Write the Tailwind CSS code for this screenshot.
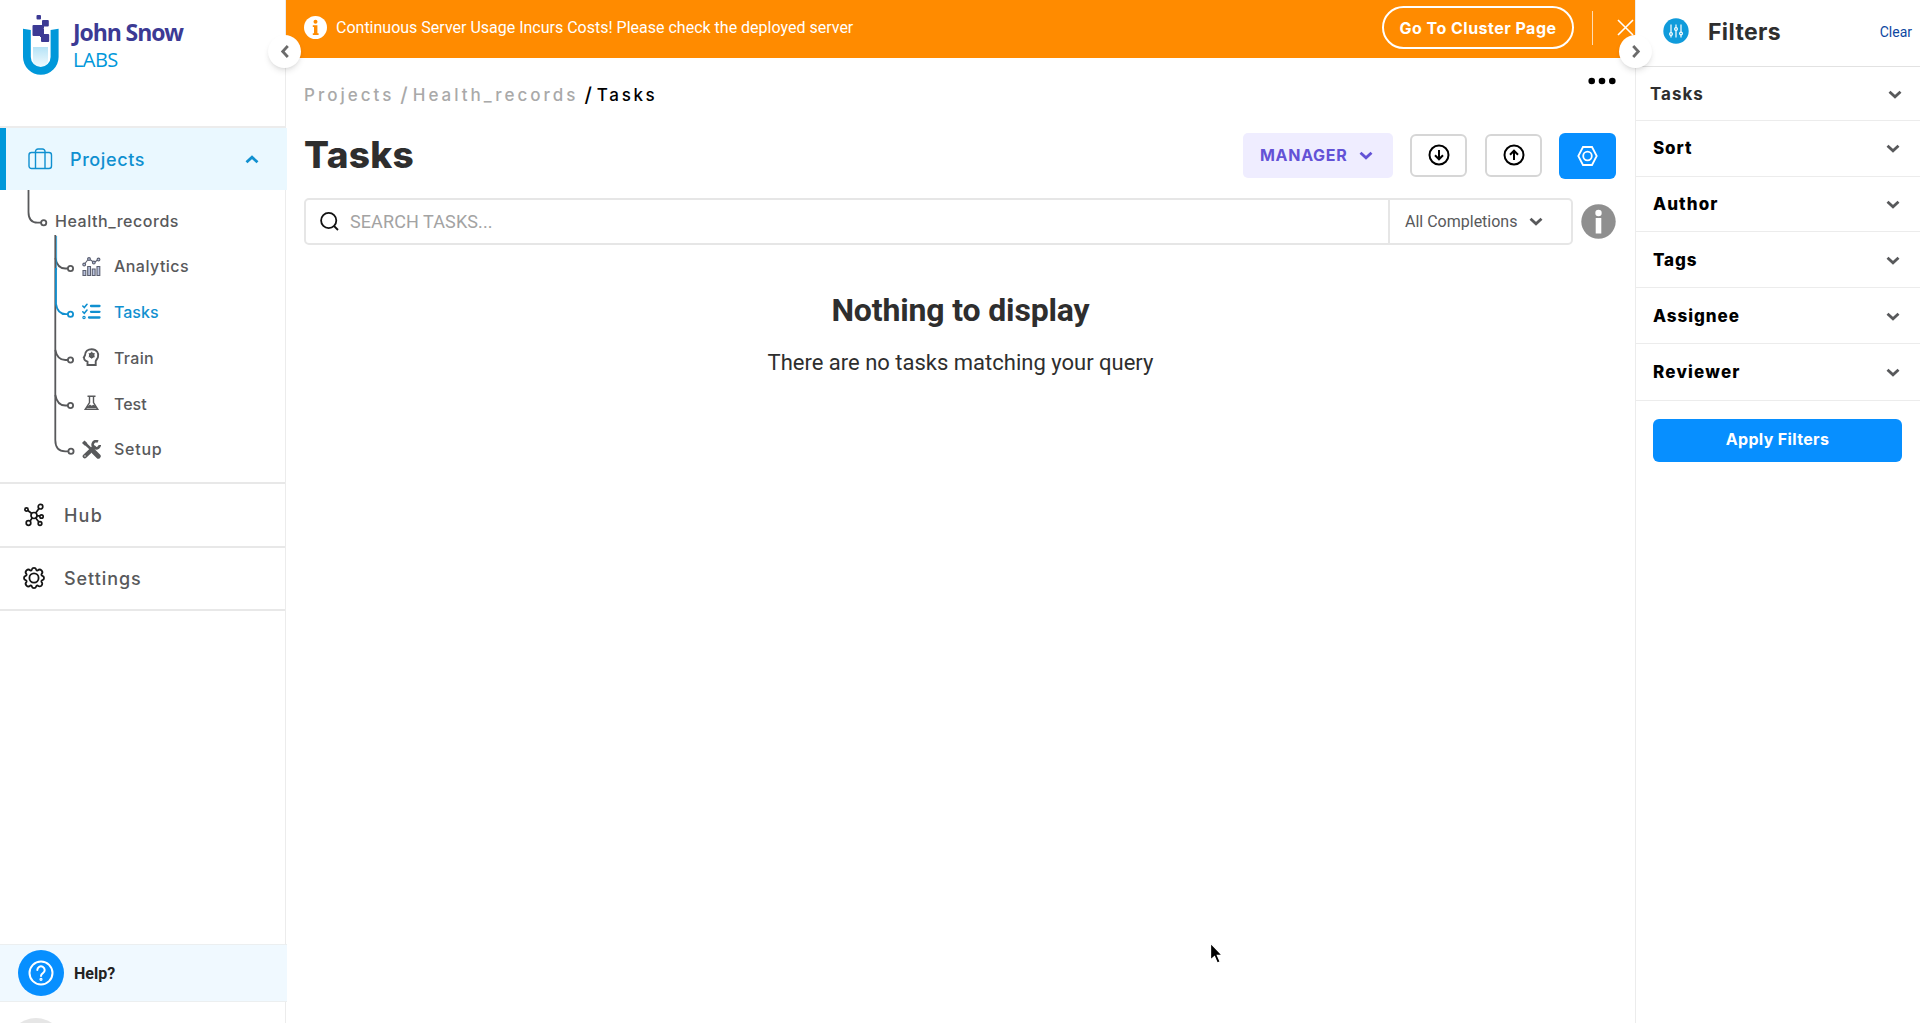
<!DOCTYPE html>
<html lang="en">
<head>
<meta charset="utf-8">
<title>Tasks</title>
<script src="https://cdn.jsdelivr.net/npm/@tailwindcss/browser@4"></script>
</head>
<body class="bg-white">
<svg class="hidden">
  <symbol id="chev" viewBox="0 0 14 9"><path d="M1.500 1.700 7 6.800l5.500-5.100" fill="none" stroke="currentColor" stroke-width="2.800"/></symbol>
</svg>
<div class="relative flex h-[1023px] w-[1920px] overflow-hidden font-['Inter',sans-serif] text-[#58595b] whitespace-nowrap">

  <!-- Sidebar -->
  <aside class="flex w-[286px] shrink-0 flex-col border-r border-[#ececec]">
    <div class="flex h-[128px] shrink-0 items-start border-b-2 border-[#ececec] pt-3.5 pl-[22px]">
      <svg class="h-[62px] w-[38px] shrink-0" viewBox="0 0 38 62">
        <defs><linearGradient id="liq" x1="0" y1="0" x2="0" y2="1"><stop offset="0" stop-color="#b5e3f6"/><stop offset="1" stop-color="#f4fbfe"/></linearGradient></defs>
        <path d="M11 33h15v12a7 7 0 0 1-15 2z" fill="url(#liq)"/>
        <path d="M1 14.800 8.800 16V43a9.900 9.900 0 0 0 19.800 0V16l8-1.200V43a17.800 17.800 0 0 1-35.600 0z" fill="#0098da"/>
        <g fill="#3c3a94"><rect x="14.500" y="1" width="4.500" height="4.500" rx="1"/><rect x="20" y="6" width="6.800" height="6.500" rx="1"/><rect x="10.500" y="11" width="11" height="11" rx="1"/><rect x="18" y="19" width="4" height="4"/><rect x="19.500" y="14.500" width="2.500" height="8"/><rect x="19" y="20" width="8.200" height="8" rx="1"/><path d="M19 11h3v3h-3z"/></g>
      </svg>
      <div class="flex flex-col pt-1 pl-[13px] font-['Open_Sans',sans-serif]">
        <span class="text-[23px] leading-[28px] font-bold tracking-[-1.100px] text-[#3c3a94]">John Snow</span>
        <span class="text-[20px] leading-[27px] tracking-[-0.600px] text-[#0098da]">LABS</span>
      </div>
    </div>

    <div class="flex h-[62px] w-[287px] shrink-0 items-center border-l-[6px] border-[#0098da] bg-[#eaf8ff] pl-[22px] text-[#1090d0]">
      <svg class="h-[22px] w-[25px]" viewBox="0 0 25 22" fill="none" stroke="currentColor" stroke-width="1.400"><rect x="1" y="4.500" width="22.500" height="16" rx="2.500"/><path d="M7.500 20.500v-17A2.500 2.500 0 0 1 10 1h4.500A2.500 2.500 0 0 1 17 3.500v17"/></svg>
      <span class="ml-[17px] text-[18px] font-medium tracking-[0.600px]">Projects</span>
      <svg class="mr-[28px] ml-auto h-[9px] w-[14px] rotate-180"><use href="#chev"/></svg>
    </div>

    <nav class="relative h-[292px] shrink-0 pt-2 text-[16px] font-medium">
      <svg class="absolute top-0 left-0 h-[292px] w-[120px]" fill="none" stroke="#58595b" stroke-width="1.800">
        <path d="M28.500 0V22q0 10.700 9 10.700H41"/><circle cx="43.700" cy="32.800" r="2.600"/>
        <path d="M55.300 45V250q0 11.300 10 11.300H68"/><circle cx="71" cy="261.300" r="2.600"/>
        <path d="M55.300 68q2 10.500 10 10.500H68"/><circle cx="70.500" cy="78.500" r="2.600"/>
        <path d="M55.300 160q2 10 10 10H68"/><circle cx="70.500" cy="170" r="2.600"/>
        <path d="M55.300 205q2 10.500 10 10.500H68"/><circle cx="70.500" cy="215.500" r="2.600"/>
        <g stroke="#1090d0"><path d="M56.600 46V80" stroke-width=".8"/><path d="M56 78V114q1.500 10.200 10 10.200H68"/><circle cx="70.500" cy="124.200" r="2.600"/></g>
      </svg>
      <a class="flex h-[45.700px] items-center pl-[55px] tracking-[0.540px]">Health_records</a>
      <a class="flex h-[45.700px] items-center gap-[13px] pb-px pl-[82px] tracking-[0.450px]">
        <svg class="h-[19px] w-[19px]" viewBox="0 0 19 19" fill="#b9c2dd" stroke="#5b5f70" stroke-width="1.100"><path d="M1 13.500h2.800v5H1zM5.700 9.500h2.800v9H5.700zM10.300 12h2.800v6.500h-2.800zM15 9.500h2.800v9H15z"/><path d="m3 6.500 3-4M8 2.500l3 2.200M13 5l2.500-2" fill="none"/><circle cx="2.200" cy="7.500" r="1.400"/><circle cx="7" cy="2" r="1.400"/><circle cx="11.800" cy="5.500" r="1.400"/><circle cx="16.500" cy="2.500" r="1.400"/></svg>
        <span>Analytics</span></a>
      <a class="flex h-[45.700px] items-center gap-[13px] pl-[82px] text-[#1090d0]">
        <svg class="h-[19px] w-[19px]" viewBox="0 0 19 19" fill="none" stroke="currentColor" stroke-width="2.300" stroke-linecap="round"><path d="M9 3h8.500M9 8.800h8.500M7 14.500h10.500"/><path d="m.8 3 1.500 1.500L5 1.300M.8 8.800l1.500 1.500L5 7.100" stroke-width="1.600"/><circle cx="2" cy="14.500" r=".6"/></svg>
        <span>Tasks</span></a>
      <a class="flex h-[45.700px] items-center gap-[13px] pl-[82px] tracking-[0.320px]">
        <svg class="h-[19px] w-[19px]" viewBox="0 0 19 19" fill="none" stroke="currentColor" stroke-width="1.900"><path d="M5.500 17v-3.400C.5 12 3 10.500 1.800 9.500L3 7.300C3 3.500 6 1.200 9.700 1.200c5 0 7.500 4.300 6.300 7.800-.5 1.700-1.800 2.800-2.300 4.200V17z"/><circle cx="9.700" cy="7.200" r="1.900" stroke-width="1.800"/><path d="M9.700 3.700v7M6.700 5.500l6 3.400M12.700 5.500l-6 3.400" stroke-width="1"/></svg>
        <span>Train</span></a>
      <a class="flex h-[45.700px] items-center gap-[13px] pl-[82px]">
        <svg class="h-[19px] w-[19px]" viewBox="0 0 19 19" fill="none" stroke="currentColor" stroke-width="1.400"><path d="M5.500 2.300h8M7.500 2.500v6L3.200 15.300h12.600L11.500 8.500v-6M6 13.300l2-1.800 1.500 1 2-1 1.800 1.800z"/></svg>
        <span>Test</span></a>
      <a class="flex h-[45.700px] items-center gap-[13px] pl-[82px] tracking-[0.750px]">
        <svg class="h-[19px] w-[19px]" viewBox="0 0 19 19" fill="none" stroke="currentColor"><path d="M2.800 16.300 12 7.500" stroke-width="4.300" stroke-linecap="round"/><path d="M16 1.600A3.600 3.600 0 1 0 17.800 5" stroke-width="2.600"/><path d="m2 2.500 8 7.500" stroke-width="2.600"/><path d="m1.200 1.700 3 2.800" stroke-width="3.600"/><path d="m11.800 11.700 4.500 4.500" stroke-width="4.800" stroke-linecap="round"/><circle cx="3" cy="16" r=".7" fill="#fff" stroke="none"/></svg>
        <span>Setup</span></a>
    </nav>

    <a class="flex h-[65.500px] shrink-0 items-center border-y-2 border-[#e8e8e8] pl-[23px] text-[18px] font-medium">
      <svg class="h-[24px] w-[22px]" viewBox="0 0 22 24" fill="none" stroke="#151515" stroke-width="1.700"><circle cx="11" cy="12.500" r="3"/><circle cx="3.500" cy="6.500" r="1.600"/><circle cx="17.500" cy="3.700" r="2.300"/><circle cx="18.500" cy="13.500" r="1.700"/><circle cx="5.500" cy="20" r="2.300"/><circle cx="17" cy="20.500" r="1.800"/><path d="m4.800 7.500 4 3M16 5.500l-3.300 4.600M14 12.800h2.800M9.200 15l-2.300 3.200M12.700 15l3.200 4"/></svg>
      <span class="mt-px ml-[19px] tracking-[1.200px]">Hub</span>
    </a>
    <a class="flex h-[63.500px] shrink-0 items-center border-b-2 border-[#e8e8e8] pl-[23px] text-[18px] font-medium">
      <svg class="h-[22px] w-[22px]" viewBox="0 0 22 22" fill="none" stroke="#151515" stroke-width="1.800" stroke-linejoin="round"><circle cx="11" cy="11" r="4.600"/><path d="M8.800 2.600a2.300 2.300 0 0 1 4.400 0q.4 1.200 1.600.8a2.500 2.500 0 0 1 3.700 3.700q-.5 1.300.9 1.700a2.300 2.300 0 0 1 0 4.400q-1.400.4-.9 1.700a2.500 2.500 0 0 1-3.700 3.700q-1.200-.4-1.600.8a2.300 2.300 0 0 1-4.400 0q-.4-1.200-1.600-.8a2.500 2.500 0 0 1-3.700-3.700q.5-1.300-.9-1.700a2.300 2.300 0 0 1 0-4.400q1.400-.4.900-1.700a2.500 2.500 0 0 1 3.700-3.700q1.200.4 1.600-.8z"/></svg>
      <span class="mt-px ml-[19px] tracking-[0.950px]">Settings</span>
    </a>

    <div class="mt-auto flex h-[58px] w-[287px] shrink-0 items-center border-y border-[#eceff0] bg-[#f0f9ff] pl-[18px] font-['Roboto',sans-serif]">
      <div class="flex size-[46px] items-center justify-center rounded-full bg-[#078fff]">
        <svg class="size-[26px]" viewBox="0 0 26 26" fill="none" stroke="#fff" stroke-width="2"><circle cx="13" cy="13" r="11.500"/><path d="M9.300 10a3.700 3.700 0 1 1 5.600 3.200c-1.300.8-1.900 1.300-1.900 2.800" stroke-linecap="round"/><circle cx="13" cy="19.300" r=".6"/></svg>
      </div>
      <span class="mt-px ml-2.5 text-[16px] font-bold text-[#222]">Help?</span>
    </div>
    <div class="h-[21px] shrink-0 overflow-hidden pt-[16px] pl-2"><div class="size-[56px] rounded-full bg-[#e6e6e6]"></div></div>
  </aside>

  <!-- Main -->
  <main class="flex w-[1349px] shrink-0 flex-col">
    <div class="flex h-[58px] shrink-0 items-center bg-[#ff8b00] pl-[18px] text-white">
      <svg class="-mt-1 size-[23px]" viewBox="0 0 23 23"><circle cx="11.500" cy="11.500" r="11.500" fill="#fff"/><circle cx="11.500" cy="5.700" r="2" fill="#ff8b00"/><path d="M8.800 9.200h4.600v8h1.200v1.800H8.800v-1.800H10V11H8.800z" fill="#ff8b00"/></svg>
      <span class="-mt-0.5 ml-[9px] font-['Roboto',sans-serif] text-[16px]">Continuous Server Usage Incurs Costs! Please check the deployed server</span>
      <button class="-mt-[3px] ml-auto h-[43px] w-[192px] rounded-full border-2 border-white text-[16px] font-bold tracking-[0.480px]">Go To Cluster Page</button>
      <div class="-mt-0.5 ml-[18px] h-[34px] w-px bg-white/70"></div>
      <svg class="mr-px -mt-[3px] ml-6 size-[17px]" viewBox="0 0 17 17" stroke="#fff" stroke-width="1.600"><path d="m1 1 15 15M16 1 1 16"/></svg>
    </div>

    <div class="flex h-[70px] shrink-0 items-start justify-between pr-[19px] pl-[18px]">
      <div class="flex pt-[21px] text-[17px] leading-[32px] font-medium tracking-[3px] text-[#a9a9a9]">
        <span>Projects</span><span class="ml-1.5 text-[20px] tracking-normal">/</span><span class="ml-[5px] tracking-[3px]">Health_records</span><span class="ml-1.5 text-[20px] tracking-normal text-black">/</span><span class="ml-[5px] tracking-[2.650px] text-black">Tasks</span>
      </div>
      <svg class="mt-[19px] h-2 w-[28px]" viewBox="0 0 28 8"><circle cx="3.700" cy="4" r="3.300"/><circle cx="14" cy="4" r="3.300"/><circle cx="24.300" cy="4" r="3.300"/></svg>
    </div>

    <div class="flex h-[54px] shrink-0 items-center pr-[19px] pl-[18px]">
      <h1 class="text-[37px] font-extrabold tracking-[0.300px] text-[#2e2e2e]">Tasks</h1>
      <button class="ml-auto flex h-[45px] w-[150px] items-center rounded-[5px] bg-[#efedff] pl-[17px] text-[#6352d6]"><span class="text-[16px] font-bold tracking-[0.700px]">MANAGER</span><svg class="ml-3 h-[9px] w-[14px]"><use href="#chev"/></svg></button>
      <button class="ml-[17px] flex h-[43px] w-[57px] items-center justify-center rounded-[6px] border-2 border-[#d6d6d6]"><svg class="size-[22px]" viewBox="0 0 22 22" fill="none" stroke="#000" stroke-width="2"><circle cx="11" cy="11" r="9.500"/><path d="M11 6v9M7 11.300l4 4 4-4"/></svg></button>
      <button class="ml-[18px] flex h-[43px] w-[57px] items-center justify-center rounded-[6px] border-2 border-[#d6d6d6]"><svg class="size-[22px]" viewBox="0 0 22 22" fill="none" stroke="#000" stroke-width="2"><circle cx="11" cy="11" r="9.500"/><path d="M11 16V7M7 10.700l4-4 4 4"/></svg></button>
      <button class="mt-px ml-[17px] flex h-[46px] w-[57px] items-center justify-center rounded-[6px] bg-[#078fff]"><svg class="h-5 w-[21px]" viewBox="0 0 21 20" fill="none" stroke="#fff" stroke-width="1.800"><path d="M6 1h9l4.700 9-4.700 9H6l-4.700-9z"/><circle cx="10.500" cy="10" r="4.300"/></svg></button>
    </div>

    <div class="mt-4 flex h-[47px] shrink-0 items-center pl-[18px]">
      <div class="flex h-full w-[1269px] items-center rounded-[5px] border-2 border-[#e6e6e6] font-['Roboto',sans-serif]">
        <svg class="ml-3.5 size-[19px]" viewBox="0 0 19 19" fill="none" stroke="#111" stroke-width="1.800"><circle cx="8.700" cy="8.500" r="7.600"/><path d="m14 14 4 4"/></svg>
        <span class="ml-[11px] text-[18px] tracking-[0.100px] text-[#a3a3a3]">SEARCH TASKS...</span>
        <div class="ml-auto flex h-full w-[183px] items-center border-l-2 border-[#e6e6e6] pl-[15px] text-[16px]"><span>All Completions</span><svg class="ml-3 h-[9px] w-[14px]"><use href="#chev"/></svg></div>
      </div>
      <svg class="ml-2 size-[35px]" viewBox="0 0 35 35"><circle cx="17.500" cy="17.500" r="17.200" fill="#8f8f8f"/><circle cx="17.500" cy="9" r="3.200" fill="#fff"/><path d="M14.700 14h5.600v15.500h-5.600z" fill="#fff"/></svg>
    </div>

    <div class="flex flex-col items-center pt-[44px] font-['Roboto',sans-serif] text-[#2e2e2e]">
      <h2 class="text-[32px] leading-[42px] font-bold tracking-[-0.150px]">Nothing to display</h2>
      <p class="mt-4 text-[22px] leading-[32px]">There are no tasks matching your query</p>
    </div>
  </main>

  <!-- Filters -->
  <aside class="flex w-[286px] shrink-0 flex-col border-l border-[#ececec] text-[17px] font-extrabold text-black">
    <div class="flex h-[67px] shrink-0 items-center border-b border-[#e2e2e2] pr-[9px] pl-[27px]">
      <svg class="-mt-1 size-[26px]" viewBox="0 0 26 26"><circle cx="13" cy="13" r="12.700" fill="#109bdb"/><g fill="#109bdb" stroke="#fff" stroke-width="1.200"><path d="M8 6.500v13M13 6.500v13M18 6.500v13"/><circle cx="8" cy="16" r="1.400"/><circle cx="13" cy="11" r="1.400"/><circle cx="18" cy="15.500" r="1.400"/></g></svg>
      <span class="-mt-0.5 ml-[19px] text-[23px] font-bold tracking-[0.360px] text-[#2e2e2e]">Filters</span>
      <span class="-mt-0.5 ml-auto font-['Roboto',sans-serif] text-[14px] font-normal text-[#0d47a1]">Clear</span>
    </div>
    <div class="flex h-[54px] shrink-0 items-center justify-between border-b border-[#ececec] pt-0.5 pr-[19px] pl-[14px] font-bold tracking-[1px] text-[#2e2e2e]">Tasks<svg class="h-[9px] w-[14px] text-[#58595b]"><use href="#chev"/></svg></div>
    <div class="flex h-[55.500px] shrink-0 items-center justify-between border-b border-[#ececec] pt-px pr-[21px] pl-[17px] tracking-[0.900px]">Sort<svg class="h-[9px] w-[14px] text-[#58595b]"><use href="#chev"/></svg></div>
    <div class="flex h-[55.500px] shrink-0 items-center justify-between border-b border-[#ececec] pt-0.5 pr-[21px] pl-[17px] tracking-[1.100px]">Author<svg class="h-[9px] w-[14px] text-[#58595b]"><use href="#chev"/></svg></div>
    <div class="flex h-[56px] shrink-0 items-center justify-between border-b border-[#ececec] pt-0.5 pr-[21px] pl-[17px] tracking-[0.850px]">Tags<svg class="h-[9px] w-[14px] text-[#58595b]"><use href="#chev"/></svg></div>
    <div class="flex h-[56px] shrink-0 items-center justify-between border-b border-[#ececec] pt-0.5 pr-[21px] pl-[17px] tracking-[0.950px]">Assignee<svg class="h-[9px] w-[14px] text-[#58595b]"><use href="#chev"/></svg></div>
    <div class="flex h-[56.500px] shrink-0 items-center justify-between border-b border-[#ececec] pt-0.5 pr-[21px] pl-[17px] tracking-[1.200px]">Reviewer<svg class="h-[9px] w-[14px] text-[#58595b]"><use href="#chev"/></svg></div>
    <button class="mt-[18px] ml-[17px] h-[43px] w-[249px] shrink-0 rounded-[6px] bg-[#078fff] pb-0.5 text-[16px] font-bold tracking-[0.350px] text-white">Apply Filters</button>
  </aside>

  <!-- Collapse handles over the column edges -->
  <button class="absolute top-[35px] left-[268px] flex size-[33px] items-center justify-center rounded-full bg-white text-[#6b6b6b] shadow-md"><svg class="h-[9px] w-[14px] rotate-90"><use href="#chev"/></svg></button>
  <button class="absolute top-[35px] left-[1619px] flex size-[33px] items-center justify-center rounded-full bg-white text-[#6b6b6b] shadow-md"><svg class="h-[9px] w-[14px] -rotate-90"><use href="#chev"/></svg></button>

  <!-- Pointer -->
  <svg class="absolute top-[942px] left-[1209px] h-6 w-4" viewBox="0 0 16 24"><path d="M1.500 1v17l4-3.500 2.700 6.500 3-1.200-2.800-6.300H13.500z" fill="#000" stroke="#fff" stroke-width="1.300"/></svg>
</div>
</body>
</html>
